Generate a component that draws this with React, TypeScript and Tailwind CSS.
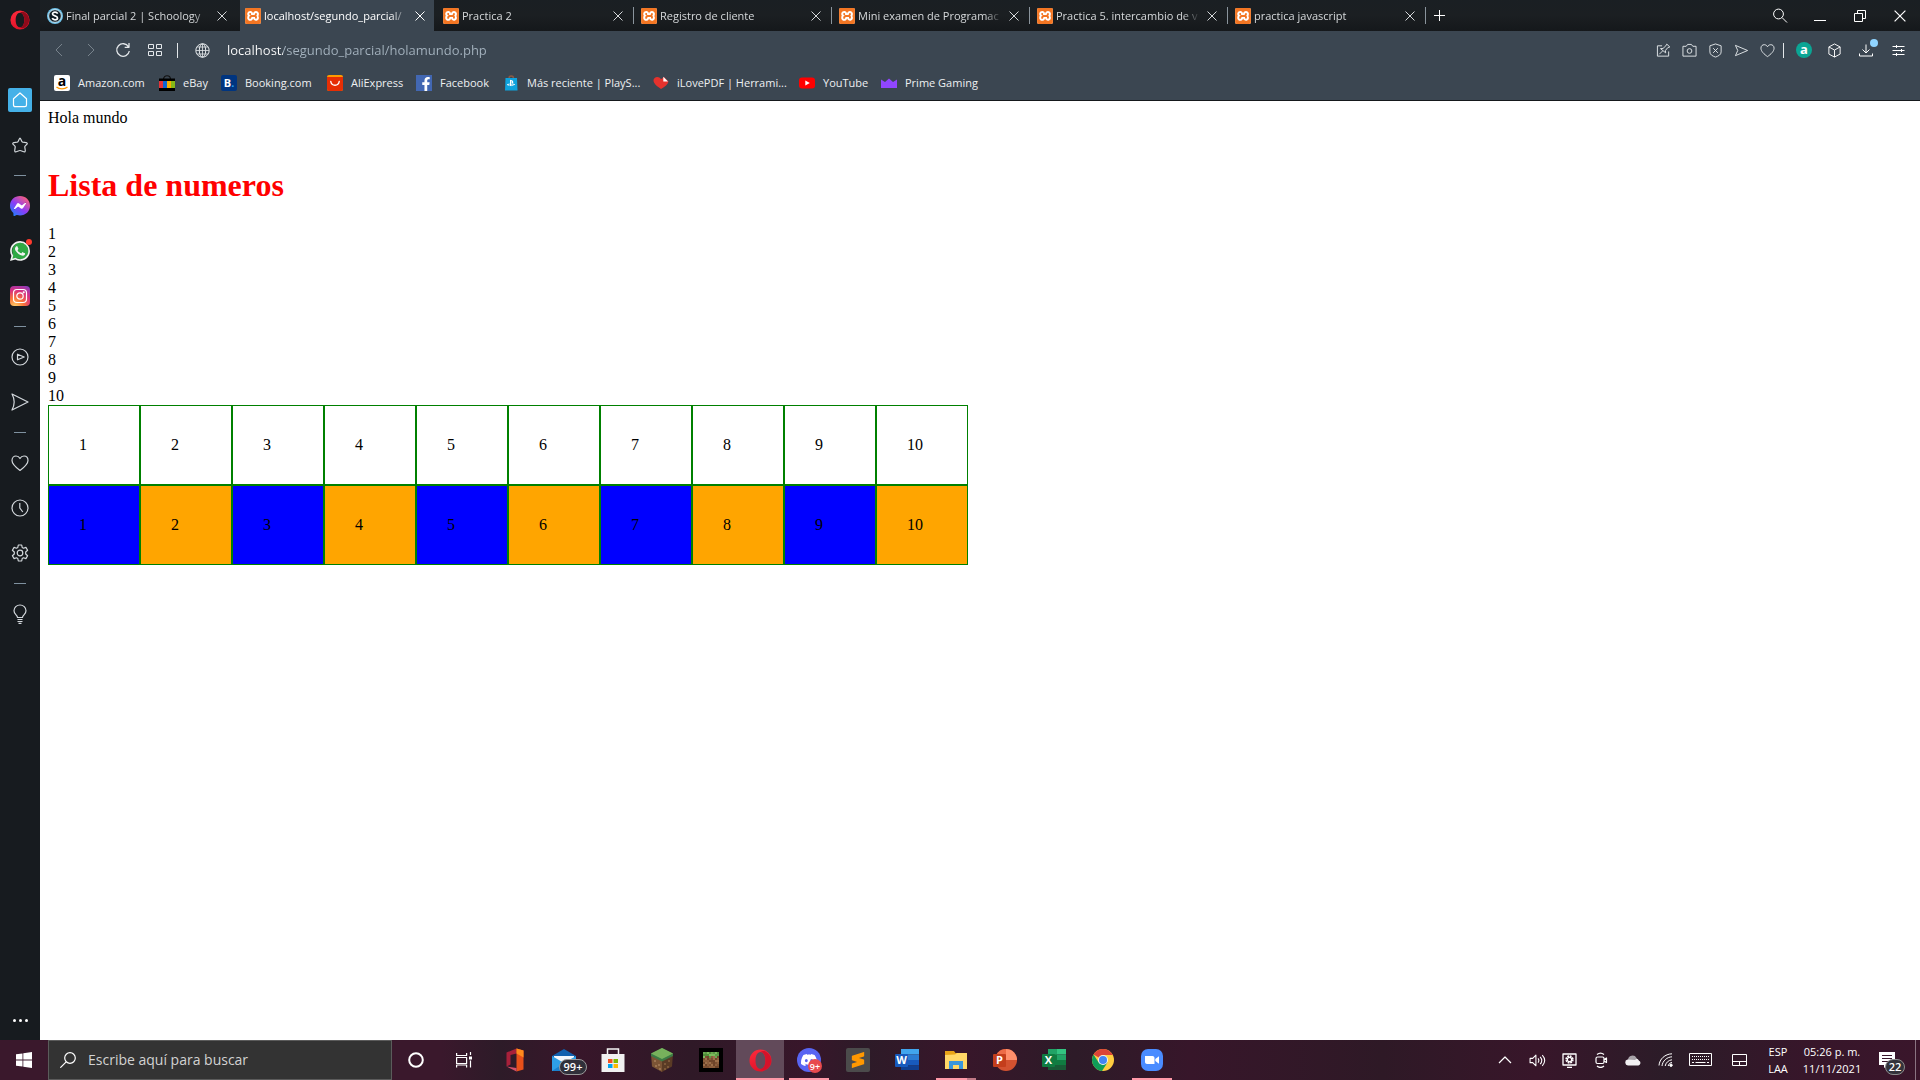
import type { ReactNode } from "react";
import { SiDiscord, SiMessenger, SiPlaystation, SiSublimetext, SiWhatsapp, SiXampp } from "react-icons/si";
import { FaFacebookF } from "react-icons/fa";

type IconProps = { size?: number; box?: number; width?: number; className?: string; children: ReactNode };

function Line({ size = 16, box = 16, width = 1, className = "", children }: IconProps) {
  return (
    <svg
      width={size}
      height={size}
      viewBox={`0 0 ${box} ${box}`}
      fill="none"
      stroke="currentColor"
      strokeWidth={width}
      strokeLinejoin="round"
      className={`shrink-0 ${className}`}
      aria-hidden="true"
    >
      {children}
    </svg>
  );
}

function XamppIcon() {
  return (
    <span className="flex size-4 shrink-0 items-center justify-center rounded-xs bg-white">
      <SiXampp className="size-4 text-[#f37623]" />
    </span>
  );
}

function SchoologyIcon() {
  return (
    <svg viewBox="0 0 16 16" className="size-4 shrink-0" aria-hidden="true">
      <circle cx="8" cy="8" r="8" fill="#6fc3ea" />
      <circle cx="8" cy="8" r="6.3" fill="#0d1a22" stroke="#e8f6fc" strokeWidth="0.8" />
      <path d="M10.7 5.6C10 4.4 8.900 4.200 8 4.200 6.500 4.200 5.500 4.900 5.500 6c0 2.500 5 1.300 5 3.900 0 1.200-1.100 1.900-2.500 1.900-1.300 0-2.300-.500-2.800-1.600" fill="none" stroke="#fff" strokeWidth="1.700" />
    </svg>
  );
}

function CloseIcon({ size = 10 }: { size?: number }) {
  return (
    <Line size={size} box={10}>
      <path d="M.5.5l9 9M9.500.5l-9 9" />
    </Line>
  );
}

function OperaRing({ size, inner }: { size: number; inner: string }) {
  return (
    <svg width={size} height={size} viewBox="0 0 24 24" aria-hidden="true">
      <defs>
        <linearGradient id={`ring${size}`} x1="0" y1="0" x2="0.300" y2="1">
          <stop offset="0" stopColor="#ff2a3c" />
          <stop offset="1" stopColor="#e0142a" />
        </linearGradient>
      </defs>
      <path
        fillRule="evenodd"
        fill={`url(#ring${size})`}
        d="M12 .5a11.500 11.500 0 1 0 0 23 11.500 11.500 0 0 0 0-23zM12 3.200c3.300 0 5.200 4 5.200 8.800s-1.900 8.800-5.200 8.800S6.800 16.800 6.800 12 8.700 3.200 12 3.200z"
      />
      <path fill={inner} d="M12 3.200c1.600-1.200 3.600-1.400 5.300-.600 3.500 2 5.700 5.500 5.700 9.400s-2.200 7.400-5.700 9.400c-1.700.800-3.700.600-5.300-.6 3.300 0 5.200-4 5.200-8.800S15.300 3.200 12 3.200z" />
    </svg>
  );
}

const tabs = [
  { title: "Final parcial 2 | Schoology", icon: <SchoologyIcon />, active: false, line: false },
  { title: "localhost/segundo_parcial/", icon: <XamppIcon />, active: true, line: false },
  { title: "Practica 2", icon: <XamppIcon />, active: false, line: true },
  { title: "Registro de cliente", icon: <XamppIcon />, active: false, line: true },
  { title: "Mini examen de Programac", icon: <XamppIcon />, active: false, line: true },
  { title: "Practica 5. intercambio de v", icon: <XamppIcon />, active: false, line: true },
  { title: "practica javascript", icon: <XamppIcon />, active: false, line: true },
];

function TabStrip() {
  return (
    <header className="flex h-[31px] bg-linear-to-b from-[#1a1f23] via-[#1b1f22] to-[#15181b]">
      <div className="flex" role="tablist" aria-label="Pestañas">
        {tabs.map((tab) => (
          <div key={tab.title} className="relative flex w-[198px] px-0.5">
            <div className={`flex min-w-0 grow items-center pl-[5px] ${tab.active ? "bg-[#3b4651] text-white" : "text-[#d5d8da]"}`}>
              <button role="tab" aria-selected={tab.active} className="flex w-[163px] items-center gap-[3px]">
                {tab.icon}
                <span className="grow overflow-hidden text-left text-[11px] leading-4 whitespace-nowrap [mask-image:linear-gradient(90deg,#000_88%,transparent)]">
                  {tab.title}
                </span>
              </button>
              <button aria-label={`Cerrar ${tab.title}`} className="ml-[7px]">
                <CloseIcon />
              </button>
            </div>
            {tab.line && <span className="absolute top-[7px] right-0 h-[17px] w-px bg-[#8a949c]" />}
          </div>
        ))}
      </div>
      <button aria-label="Nueva pestaña" className="w-7 pl-2 text-white">
        <Line size={12} box={12}>
          <path d="M5.500 0v11M0 5.500h11" />
        </Line>
      </button>
      <div className="ml-auto flex items-center text-white">
        <button aria-label="Buscar en pestañas" className="flex w-10 justify-center">
          <Line size={16}>
            <circle cx="6.500" cy="6" r="4.900" />
            <path d="M10 9.500l5 5" />
          </Line>
        </button>
        <button aria-label="Minimizar" className="flex w-10 justify-center">
          <Line size={12} box={12}>
            <path d="M0 10.500h12" />
          </Line>
        </button>
        <button aria-label="Restaurar" className="flex w-10 justify-center">
          <Line size={12} box={12}>
            <path d="M.5 3.500h8v8h-8zM3.500 3.500v-3h8v8h-3" />
          </Line>
        </button>
        <button aria-label="Cerrar" className="flex w-10 justify-center">
          <CloseIcon size={12} />
        </button>
      </div>
    </header>
  );
}

const pageTools: [string, ReactNode][] = [
  ["Editar página", <path d="M6.500 3H1.500v11h12V9M11.500 1.200l3.200 3-2.200.800-2.500 3 .3 2.500L4.800 6l2.700-.2L10.500 3zM7 8.500L3.500 12" />],
  ["Instantánea", <><path d="M1 3.500h3.500l1.500-2h4l1.500 2H15v10.500H1z" /><circle cx="8" cy="8.500" r="2.500" /></>],
  ["Bloqueador", <><path d="M8 1L2 3v6.500C2 12.500 5 14 8 15c3-1 6-2.500 6-5.500V3z" /><path d="M5.500 5.500l5 5M10.500 5.500l-5 5" /></>],
  ["Enviar a Mi flujo", <path d="M1.500 2.500l13 5.500-13 5.500L4 8z" />],
  ["Favoritos", <path d="M8 14.500C4.500 12 1 9 1 5.500 1 3 2.800 1.800 4.500 1.800c1.600 0 2.800.9 3.500 2.200.7-1.300 1.900-2.200 3.500-2.200C13.200 1.800 15 3 15 5.500c0 3.500-3.500 6.500-7 9z" />],
];

function AddressRow() {
  return (
    <div className="flex h-[38px] items-center text-[#e3e7ea]">
      <div className="flex items-center pl-[3px]">
        <button aria-label="Atrás" className="flex w-8 justify-center text-[#78838c]">
          <Line><path d="M11 2L5 8l6 6" /></Line>
        </button>
        <button aria-label="Adelante" className="flex w-8 justify-center text-[#78838c]">
          <Line><path d="M5 2l6 6-6 6" /></Line>
        </button>
        <button aria-label="Recargar" className="flex w-8 justify-center">
          <Line width={1.3}><path d="M13.500 4.800A6.300 6.300 0 1 0 14.300 9M14 1v4.300H9.700" /></Line>
        </button>
        <button aria-label="Acceso rápido" className="flex w-8 justify-center">
          <Line size={14} box={14}>
            <path d="M.5 1.500h5v4h-5zM8.500 1.500h5v4h-5zM.5 8.500h5v4h-5zM8.500 8.500h5v4h-5z" />
          </Line>
        </button>
      </div>
      <span className="ml-1.5 h-[15px] w-px bg-[#e3e7ea]" />
      <button aria-label="Información del sitio" className="ml-[17px]">
        <Line size={15} box={15}>
          <circle cx="7.500" cy="7.500" r="6.700" />
          <ellipse cx="7.500" cy="7.500" rx="3.200" ry="6.700" />
          <path d="M7.500 1v13M1 7.500h13M2 4h11M2 11h11" strokeWidth="0.8" />
        </Line>
      </button>
      <input
        aria-label="Dirección"
        defaultValue="localhost/segundo_parcial/holamundo.php"
        className="ml-[17px] h-6 min-w-0 grow bg-[linear-gradient(90deg,#fff_56px,#a5b3bf_56px)] bg-clip-text text-[13px] text-transparent caret-white outline-none"
      />
      <div className="flex items-center">
        {pageTools.map(([label, shape]) => (
          <button key={label} aria-label={label} className="flex w-[26px] justify-center">
            <Line size={15}>{shape}</Line>
          </button>
        ))}
      </div>
      <span className="ml-[3px] h-[15px] w-px bg-[#e3e7ea]" />
      <button aria-label="Amazon Assistant" className="ml-3 flex size-4 items-center justify-center rounded-full bg-[#0ba594] text-[13px] leading-4 font-bold text-white">
        <span className="-mt-0.5">a</span>
      </button>
      <div className="ml-1.5 flex items-center">
        <button aria-label="Extensiones" className="flex w-8 justify-center">
          <Line size={15} className="text-white"><path d="M8 1l6 3.200v7.600L8 15l-6-3.200V4.200zM2 4.200l6 3.300 6-3.300M8 7.500V15" /></Line>
        </button>
        <button aria-label="Descargas" className="relative flex w-8 justify-center">
          <Line size={14} box={14} className="text-white"><path d="M7 1.500v8.500M3.500 6.500L7 10l3.500-3.500M.5 10.500V13h13v-2.500" /></Line>
          <span className="absolute -top-1 right-1 size-2 rounded-full bg-[#90d4ff]" />
        </button>
        <button aria-label="Configuración rápida" className="mr-1.5 flex w-8 justify-center">
          <Line size={13} box={13} className="text-white"><path d="M.5 2.500h12M.5 6.500h12M.5 10.500h12M4.500 1v3M9.500 5v3M4.500 9v3" /></Line>
        </button>
      </div>
    </div>
  );
}

const bookmarks: { label: string; width: string; icon: ReactNode }[] = [
  {
    label: "Amazon.com",
    width: "w-[105px]",
    icon: (
      <span className="relative flex size-4 items-center justify-center rounded-xs bg-white text-sm leading-4 font-bold text-black">
        <span className="-mt-1">a</span>
        <svg viewBox="0 0 16 16" className="absolute inset-0 size-4" aria-hidden="true">
          <path d="M2.500 12c3 2.500 8 2.500 11 0" fill="none" stroke="#ff9900" strokeWidth="1.300" />
        </svg>
      </span>
    ),
  },
  {
    label: "eBay",
    width: "w-[62px]",
    icon: (
      <svg viewBox="0 0 16 16" className="size-4" aria-hidden="true">
        <path d="M4.500 4.500c0-5 7-5 7 0" fill="none" stroke="#111" strokeWidth="1.200" />
        <path d="M0 3.500h16V16H0z" fill="#000" />
        <path d="M0 6h4v7H0z" fill="#e53238" />
        <path d="M4 6h4v7H4z" fill="#0f65d2" />
        <path d="M8 6h4v7H8z" fill="#f5af02" />
        <path d="M12 6h4v7h-4z" fill="#86b817" />
      </svg>
    ),
  },
  {
    label: "Booking.com",
    width: "w-[106px]",
    icon: (
      <span className="flex size-4 items-center justify-center rounded-xs bg-[#003580] text-[11px] leading-4 font-bold text-white">
        B<span className="text-[#2a9fe8]">.</span>
      </span>
    ),
  },
  {
    label: "AliExpress",
    width: "w-[89px]",
    icon: (
      <svg viewBox="0 0 16 16" className="size-4" aria-hidden="true">
        <rect width="16" height="16" rx="2" fill="#ff9a00" />
        <path d="M0 2h16v12a2 2 0 0 1-2 2H2a2 2 0 0 1-2-2z" fill="#e62e04" />
        <path d="M3.800 6.500c.8 5 7.600 5 8.400 0" fill="none" stroke="#fff" strokeWidth="1.400" strokeLinecap="round" />
      </svg>
    ),
  },
  {
    label: "Facebook",
    width: "w-[87px]",
    icon: (
      <span className="flex size-4 items-end justify-center bg-[#4267b2] pl-1">
        <FaFacebookF className="size-3.5 text-white" />
      </span>
    ),
  },
  {
    label: "Más reciente | PlayS...",
    width: "w-[150px]",
    icon: (
      <span className="relative flex size-4 items-end justify-center">
        <svg viewBox="0 0 16 16" className="absolute inset-0 size-4" aria-hidden="true">
          <path d="M6 3.500c0-3.500 4.500-3.500 4.500 0" fill="none" stroke="#8b5a44" strokeWidth="1.500" />
          <path d="M2.500 3h11.500l.5 12.500H2z" fill="#0fa3dd" />
        </svg>
        <SiPlaystation className="relative mb-1 size-2 text-white" />
      </span>
    ),
  },
  {
    label: "iLovePDF | Herrami...",
    width: "w-[146px]",
    icon: (
      <svg viewBox="0 0 16 16" className="size-4" aria-hidden="true">
        <path d="M8 14C3.500 11 .5 8.500.5 5.300c0-3.600 5.500-4.800 7.500-1.100L11 2l4.500 4.500C15 9.500 12 11.500 8 14z" fill="#e5322d" />
        <path d="M10.300 1.800v4.700H15z" fill="#fff" />
      </svg>
    ),
  },
  {
    label: "YouTube",
    width: "w-[82px]",
    icon: (
      <svg viewBox="0 0 16 16" className="size-4" aria-hidden="true">
        <rect y="2.500" width="16" height="11" rx="3" fill="#f00" />
        <path d="M6.300 5.500v5L10.800 8z" fill="#fff" />
      </svg>
    ),
  },
  {
    label: "Prime Gaming",
    width: "w-[105px]",
    icon: (
      <svg viewBox="0 0 16 16" className="size-4" aria-hidden="true">
        <path d="M0 4.500L4 7l4-3.500L12 7l4-2.500V13H0z" fill="#9146ff" />
      </svg>
    ),
  },
];

function BookmarkRow() {
  return (
    <nav aria-label="Marcadores" className="flex h-[31px] items-center pb-1 pl-3.5">
      {bookmarks.map((item) => (
        <a key={item.label} href="#" className={`flex items-center gap-2 text-[11px] leading-4 whitespace-nowrap text-[#eef0f2] ${item.width}`}>
          <span className="shrink-0">{item.icon}</span>
          {item.label}
        </a>
      ))}
    </nav>
  );
}

type SideItem = { label: string; icon: ReactNode } | null;

const sideItems: SideItem[] = [
  {
    label: "Inicio",
    icon: (
      <span className="flex size-6 items-center justify-center rounded-xs bg-[#45b1e8] text-white">
        <Line width={1.2}><path d="M1.500 6.800L8 1l6.500 5.800V13c0 1-.7 1.700-1.700 1.700H3.200c-1 0-1.700-.7-1.700-1.700z" /></Line>
      </span>
    ),
  },
  { label: "Marcadores", icon: <Line width={1.2}><path d="M8 1c.7 0 1.200 3.200 2.300 3.900C11.400 5.600 15.300 5.300 15.300 6.400c0 1.100-2.300 2.200-2.500 3.300-.2 1.300 1.200 4.300.2 5-.9.600-3.500-1.200-5-1.200s-4.100 1.800-5 1.200c-1-.7.400-3.700.2-5C3 8.600.7 7.500.7 6.400.7 5.300 4.600 5.600 5.700 4.900 6.800 4.200 7.300 1 8 1z" /></Line> },
  null,
  {
    label: "Messenger",
    icon: (
      <>
        <svg className="absolute size-0" aria-hidden="true">
          <defs>
            <linearGradient id="msg" x1="0" y1="1" x2="0.800" y2="0">
              <stop offset="0" stopColor="#0a8cff" />
              <stop offset="0.500" stopColor="#8b3cf7" />
              <stop offset="1" stopColor="#ff6275" />
            </linearGradient>
          </defs>
        </svg>
        <span className="flex size-5 items-center justify-center rounded-full bg-[radial-gradient(circle,#fff_45%,transparent_46%)]">
          <SiMessenger className="size-5 fill-[url(#msg)]" />
        </span>
      </>
    ),
  },
  {
    label: "WhatsApp",
    icon: (
      <span className="relative flex size-5 items-center justify-center">
        <svg viewBox="0 0 20 20" className="absolute inset-0 size-5" aria-hidden="true">
          <path d="M1.500 18.500L3 13.500A8.200 8.200 0 1 1 6.800 17.300z" fill="#2fa944" />
        </svg>
        <SiWhatsapp className="relative size-5 text-[#f1f4f1]" />
        <span className="absolute -top-0.5 -right-0.5 size-1.5 rounded-full bg-[#ff3b2f]" />
      </span>
    ),
  },
  {
    label: "Instagram",
    icon: (
      <span className="flex size-5 items-center justify-center rounded-sm bg-[radial-gradient(circle_at_25%_105%,#ffd56b_0%,#f9743a_35%,#d92f7f_65%,#7640c9_100%)] text-white">
        <Line size={16} width={1.2}>
          <rect x="1.500" y="1.500" width="13" height="13" rx="3.500" />
          <circle cx="8" cy="8" r="3.200" />
          <circle cx="11.700" cy="4.300" r="0.500" />
        </Line>
      </span>
    ),
  },
  null,
  { label: "Reproductor", icon: <Line size={18} box={18} width={1.2}><circle cx="9" cy="9" r="8" /><path d="M6.500 6.200v5.600l6.700-2.800z" /></Line> },
  { label: "Mi flujo", icon: <Line size={18} box={18} width={1.2}><path d="M1 1l16 8-16 8c3-5.500 3-10.500 0-16z" /></Line> },
  null,
  { label: "Me gusta", icon: <Line size={18} box={18} width={1.2}><path d="M9 16.500C5 13.500 1 10.500 1 6.500 1 3.500 3 2 5 2c1.800 0 3.200 1 4 2.500C9.800 3 11.200 2 13 2c2 0 4 1.500 4 4.500 0 4-4 7-8 10z" /></Line> },
  { label: "Historial", icon: <Line size={18} box={18} width={1.2}><circle cx="9" cy="9" r="8" /><path d="M8.800 4v5l3 4" /></Line> },
  {
    label: "Configuración",
    icon: (
      <Line size={18} box={18} width={1.2}>
        <circle cx="9" cy="9" r="2.800" />
        <path d="M7.300 1h3.400l.5 2.500 1.300.7 2.400-.8 1.700 2.900-1.900 1.700v2l1.900 1.700-1.700 2.900-2.400-.8-1.300.7-.5 2.500H7.300l-.5-2.500-1.300-.7-2.400.8-1.700-2.900L3.300 10V8L1.400 6.300l1.700-2.900 2.400.8 1.300-.7z" />
      </Line>
    ),
  },
  null,
  {
    label: "Consejos",
    icon: (
      <Line size={20} box={20} width={1.200}>
        <path d="M7.500 13.500C7.500 11 4 10.500 4 6.700 4 3.300 6.700 1 10 1s6 2.300 6 5.700c0 3.800-3.500 4.300-3.500 6.800zM7.500 15.500h5M7.500 17.500h5M8.500 19.300h3" />
      </Line>
    ),
  },
];

function Sidebar() {
  return (
    <aside className="flex w-10 shrink-0 flex-col items-center bg-[#171b1f] text-[#d3d8dc]">
      <button aria-label="Menú de Opera" className="mt-2.5 mb-[47px] size-5">
        <OperaRing size={20} inner="#8e0a1a" />
      </button>
      {sideItems.map((item, i) =>
        item ? (
          <button key={item.label} aria-label={item.label} className="flex h-[45px] w-10 items-center justify-center">
            {item.icon}
          </button>
        ) : (
          <span key={i} className="flex h-4 items-center">
            <span className="h-px w-3 bg-[#7f919f]" />
          </span>
        ),
      )}
      <button aria-label="Personalizar barra lateral" className="mt-auto mb-3 flex h-4 w-10 items-center justify-center gap-[3px]">
        <span className="size-[3px] rounded-full bg-white" />
        <span className="size-[3px] rounded-full bg-white" />
        <span className="size-[3px] rounded-full bg-white" />
      </button>
    </aside>
  );
}

const numbers = [1, 2, 3, 4, 5, 6, 7, 8, 9, 10];

function Page() {
  return (
    <main className="grow border-t border-[#15181b] bg-white p-2 font-['Liberation_Serif',serif] text-base leading-[18px] text-black">
      <p>Hola mundo</p>
      <h1 className="mt-10 mb-[21px] text-[32px] leading-[37px] font-bold text-[#ff0000]">Lista de numeros</h1>
      {numbers.map((n) => (
        <p key={n}>{n}</p>
      ))}
      <table className="table-fixed border-separate border-spacing-0">
        <tbody>
          <tr>
            {numbers.map((n) => (
              <td key={n} className="h-20 w-[92px] border border-[#008000] px-[30px]">{n}</td>
            ))}
          </tr>
          <tr>
            {numbers.map((n) => (
              <td key={n} className="h-20 w-[92px] border border-[#008000] px-[30px] odd:bg-[#0000ff] even:bg-[#ffa500]">{n}</td>
            ))}
          </tr>
        </tbody>
      </table>
    </main>
  );
}

function OfficeTile({ letter, dark, children }: { letter: string; dark: string; children: ReactNode }) {
  return (
    <span className="relative flex size-6 items-center">
      <svg viewBox="0 0 24 24" className="absolute inset-0 size-6" aria-hidden="true">
        {children}
        <rect x="0" y="6" width="13" height="13" rx="1" fill={dark} />
      </svg>
      <span className="relative w-[13px] text-center text-[11px] leading-4 font-bold text-white">{letter}</span>
    </span>
  );
}

const grass = ["#6aa84f", "#4f8f3a", "#7bbb5c", "#5a9a45"];
const dirt = ["#8b5e3c", "#6e452a", "#9c6f4a", "#7b4f31"];

const apps: { label: string; state: string; icon: ReactNode }[] = [
  {
    label: "Office",
    state: "idle",
    icon: (
      <svg viewBox="0 0 24 24" className="size-6" aria-hidden="true">
        <path d="M13.500.5L3.500 4.500v14l4-2V7l6-1.500z" fill="#a8203a" />
        <path d="M13.500.5l7 2v19l-7 2z" fill="#e8501a" />
        <path d="M13.500.5l7 2v7l-7-4z" fill="#ff8a1d" />
        <path d="M3.500 18.500l10 1.500v3.500z" fill="#d4506a" />
      </svg>
    ),
  },
  {
    label: "Correo",
    state: "idle",
    icon: (
      <span className="relative">
        <svg viewBox="0 0 24 24" className="size-6" aria-hidden="true">
          <path d="M0 8L12 1l12 7v15H0z" fill="#1261ae" />
          <path d="M2 8h20v8H2z" fill="#f3f7fb" />
          <path d="M0 8l12 7 12-7v15H0z" fill="#2e9fe6" />
          <path d="M0 23l13-8.500L24 23z" fill="#1b80cc" />
        </svg>
        <span className="absolute top-[11px] left-[7px] flex h-4 w-7 items-center justify-center rounded-full border border-[#9a9a9a] bg-[#30303a] text-[11px] font-semibold text-white">99+</span>
      </span>
    ),
  },
  {
    label: "Microsoft Store",
    state: "idle",
    icon: (
      <svg viewBox="0 0 24 24" className="size-6" aria-hidden="true">
        <path d="M6.500 7V1h11v6" fill="none" stroke="#f4f4f4" strokeWidth="1.500" />
        <path d="M.5 6h23v18H.5z" fill="#f1f1f1" />
        <path d="M7 11h4.500v4H7z" fill="#f25022" />
        <path d="M12.500 11H17v4h-4.500z" fill="#7fba00" />
        <path d="M7 16h4.500v4H7z" fill="#00a4ef" />
        <path d="M12.500 16H17v4h-4.500z" fill="#ffb900" />
      </svg>
    ),
  },
  {
    label: "Minecraft Launcher",
    state: "idle",
    icon: (
      <svg viewBox="0 0 24 24" className="size-6" aria-hidden="true">
        <path d="M1 6l11 5.500V24L2 18.500z" fill="#7b5435" />
        <path d="M23 6l-11 5.500V24l10-5.500z" fill="#5a3b25" />
        <path d="M12 0l11 5.500v2.500L12 13.500 1 8V5.500z" fill="#3c7a45" />
        <path d="M12 0l11 5.500L12 11 1 5.500z" fill="#77b15c" />
        <path d="M4 12h2v2H4zM8 16h2v2H8zM5 17h2v2H5zM9 20h2v2H9z" fill="#9b7350" />
        <path d="M14 15h2v2h-2zM18 12h2v2h-2zM17 18h2v2h-2zM14 20h2v2h-2z" fill="#7d5838" />
      </svg>
    ),
  },
  {
    label: "Minecraft",
    state: "idle",
    icon: (
      <svg viewBox="0 0 24 24" className="size-6" shapeRendering="crispEdges" aria-hidden="true">
        <path d="M0 0h24v24H0z" fill="#000" />
        {Array.from({ length: 64 }, (_, i) => {
          const row = Math.floor(i / 8);
          const col = i % 8;
          const green = row < 2 || (row === 2 && col % 3 === 0);
          const tone = (row * 5 + col * 3 + ((row * col) % 3)) % 4;
          return <rect key={i} x={4 + col * 2} y={4 + row * 2} width="2" height="2" fill={green ? grass[tone] : dirt[tone]} />;
        })}
      </svg>
    ),
  },
  { label: "Opera", state: "active", icon: <OperaRing size={23} inner="#d5122a" /> },
  {
    label: "Discord",
    state: "open",
    icon: (
      <span className="relative flex size-6 items-center justify-center rounded-full bg-[#5865f2]">
        <SiDiscord className="size-4 text-white" />
        <span className="absolute -right-px -bottom-px flex size-3.5 items-center justify-center rounded-full bg-[#e84a4d] text-[9px] leading-none font-semibold text-white">9+</span>
      </span>
    ),
  },
  {
    label: "Sublime Text",
    state: "idle",
    icon: (
      <span className="flex size-6 items-center justify-center rounded-xs bg-[#4b4b4b]">
        <SiSublimetext className="size-4 text-[#ff9800]" />
      </span>
    ),
  },
  {
    label: "Word",
    state: "idle",
    icon: (
      <OfficeTile letter="W" dark="#185abd">
        <path d="M6 1h18v5.500H6z" fill="#41a5ee" />
        <path d="M6 6.500h18V12H6z" fill="#2b7cd3" />
        <path d="M6 12h18v5.500H6z" fill="#185abd" />
        <path d="M6 17.500h18V22H6z" fill="#103f91" />
      </OfficeTile>
    ),
  },
  {
    label: "Explorador de archivos",
    state: "multi",
    icon: (
      <svg viewBox="0 0 24 24" className="size-6" aria-hidden="true">
        <path d="M1 3h9l1.500 2H23v15H1z" fill="#e8a317" />
        <path d="M1 7l10-.5L13 5h10v16H1z" fill="#ffd767" />
        <path d="M5 13h14v8h-4v-4H9v4H5z" fill="#3996dc" />
      </svg>
    ),
  },
  {
    label: "PowerPoint",
    state: "idle",
    icon: (
      <OfficeTile letter="P" dark="#c43e1c">
        <circle cx="13" cy="12" r="11" fill="#d35230" />
        <path d="M13 1a11 11 0 0 1 11 11H13z" fill="#ff8f6b" />
        <path d="M13 1v11H2A11 11 0 0 1 13 1z" fill="#ed6c47" />
      </OfficeTile>
    ),
  },
  {
    label: "Excel",
    state: "idle",
    icon: (
      <OfficeTile letter="X" dark="#107c41">
        <path d="M6 1h9v7H6z" fill="#21a366" />
        <path d="M15 1h9v5.500h-9z" fill="#33c481" />
        <path d="M6 6.500h9V17H6z" fill="#107c41" />
        <path d="M15 6.500h9V12h-9z" fill="#21a366" />
        <path d="M15 12h9v5h-9z" fill="#107c41" />
        <path d="M6 17h18v5H6z" fill="#185c37" />
      </OfficeTile>
    ),
  },
  {
    label: "Google Chrome",
    state: "idle",
    icon: (
      <svg viewBox="0 0 24 24" className="size-6" aria-hidden="true">
        <circle cx="12" cy="12" r="11" fill="#ffcd40" />
        <path d="M12 12L2.500 6.500a11 11 0 0 1 19 0L22 7H12z" fill="#db4437" />
        <path d="M2.500 6.500A11 11 0 0 0 11 23l5.500-8.500L12 12 7.700 14.500z" fill="#0f9d58" />
        <circle cx="12" cy="12" r="5" fill="#f1f1f1" />
        <circle cx="12" cy="12" r="4" fill="#4285f4" />
      </svg>
    ),
  },
  {
    label: "Zoom",
    state: "open",
    icon: (
      <svg viewBox="0 0 24 24" className="size-6" aria-hidden="true">
        <rect x="1" y="1" width="22" height="22" rx="7" fill="#4a8cff" />
        <path d="M5 8h7.500c1 0 2 .8 2 2v6H7c-1 0-2-.8-2-2zM15.300 11l3.700-2.700v7.400L15.300 13z" fill="#fff" />
      </svg>
    ),
  },
];

function AppButton({ label, state, icon }: { label: string; state: string; icon: ReactNode }) {
  return (
    <button aria-label={label} className={`relative flex h-10 w-12 items-center justify-center ${state === "active" ? "bg-[#624a5a]" : ""}`}>
      {icon}
      {state === "active" && <span className="absolute inset-x-0 bottom-0 h-0.5 bg-[#ff99a8]" />}
      {state === "open" && <span className="absolute inset-x-1 bottom-0 h-0.5 bg-[#ff99a8]" />}
      {state === "multi" && <span className="absolute inset-x-1 bottom-0 h-0.5 border-r-9 border-[#c07886] bg-[#ff99a8]" />}
    </button>
  );
}

const tray: { label: string; width: string; icon: ReactNode }[] = [
  { label: "Mostrar iconos ocultos", width: "w-8", icon: <Line size={14} box={14} width={1.2}><path d="M1 10l6-6 6 6" /></Line> },
  { label: "Volumen", width: "w-8", icon: <Line size={17}><path d="M1 6h2.500l3-3v10l-3-3H1zM8.500 6c1 1.300 1 2.700 0 4M10.500 4.500c2 2.300 2 4.700 0 7M12.500 3c3 3.300 3 6.700 0 10" /></Line> },
  { label: "Gráficos", width: "w-8", icon: <Line size={15} box={15} width={1.3}><path d="M1 1h13v11H1zM5 14.300h5" /><circle cx="7.500" cy="6.500" r="3.200" strokeWidth="2" strokeDasharray="1.700 .8" /><circle cx="7.500" cy="6.500" r="2.200" /></Line> },
  { label: "Reunirse ahora", width: "w-8", icon: <Line size={16} width={1.200}><rect x="3" y="5" width="8" height="6.500" rx="1.500" /><path d="M11 7.500l2.500-1.500v4.500L11 9M4 2.500c2-1.700 5-1.700 7 0M4 14c2 1.700 5 1.700 7 0" /></Line> },
  {
    label: "OneDrive",
    width: "w-8",
    icon: (
      <svg width="16" height="16" viewBox="0 0 16 16" aria-hidden="true">
        <path d="M3 8a4.500 4.500 0 0 1 8.500-2L14 9z" fill="#a8a2a8" />
        <path d="M3 13.500A3 3 0 0 1 2.500 7.600L10 8c1.500-1.500 3-1 3.700.500A2.600 2.600 0 0 1 13.500 13.500z" fill="#f3f1f3" />
      </svg>
    ),
  },
  { label: "Red Wi-Fi", width: "w-[33px]", icon: <Line size={16}><path d="M1 13.500C1.500 7 7 2 14 1.800M4 14c.5-5 5-9 10-9.200M7.200 14c.4-3 3.300-6 6.800-6.200M10.200 14c.3-2 2-3.500 3.800-3.500" /><circle cx="13" cy="13.200" r="1.200" fill="currentColor" /></Line> },
  {
    label: "Teclado táctil",
    width: "w-9",
    icon: (
      <svg width="23" height="14" viewBox="0 0 23 14" fill="none" stroke="currentColor" aria-hidden="true">
        <path d="M.5.5h22v12H.5z" />
        <path d="M3 3.500h17M3 6.500h17" strokeDasharray="1 1" />
        <path d="M3 9.500h2M6.500 9.500h10M18 9.500h2" />
      </svg>
    ),
  },
  { label: "Panel táctil virtual", width: "w-11", icon: <Line size={16}><path d="M.5 2.500h14v11H.5zM.5 9.500h14M7.500 9.500v4" /></Line> },
];

function Taskbar() {
  return (
    <footer className="flex h-10 items-center bg-[linear-gradient(90deg,#3a182c_0%,#3a182c_23%,#2d1b28_26%,#38162a_30%,#2f1927_36%,#38162a_42%,#2d1b28_45%,#38162a_50%,#2d1b28_56%,#37162a_62%,#2e1926_72%,#38162a_80%,#2b1c28_87%,#37162a_94%,#3a162b_100%)] text-white">
      <button aria-label="Inicio" className="flex h-10 w-12 items-center justify-center">
        <svg width="16" height="16" viewBox="0 0 16 16" fill="#fff" aria-hidden="true">
          <path d="M0 2.300L6.500 1.400v6.200H0zM7.300 1.300L16 0v7.600H7.300zM0 8.400h6.500v6.200L0 13.700zM7.300 8.400H16V16l-8.700-1.300z" />
        </svg>
      </button>
      <label className="flex h-10 w-[344px] items-center gap-3 border border-[#5b5b5b] bg-[#333] pl-[11px]">
        <Line size={16} width={1.2}>
          <circle cx="10" cy="6" r="5.300" />
          <path d="M6.200 9.800L.3 15.700" />
        </Line>
        <span className="sr-only">Buscar</span>
        <input placeholder="Escribe aquí para buscar" className="min-w-0 grow bg-transparent text-sm outline-none placeholder:text-[#d2d2d2]" />
      </label>
      <button aria-label="Cortana" className="flex w-12 justify-center">
        <Line width={2}><circle cx="8" cy="8" r="6.800" /></Line>
      </button>
      <button aria-label="Vista de tareas" className="flex w-12 justify-center">
        <Line width={1.2}><path d="M.6 1v2.500h10V1M.6 5.500h10v6H.6zM.6 15.500v-2.500h10v2.500M14.500 0v3M14.500 8.500v7" /><path d="M13 4.500h3v3h-3z" fill="currentColor" stroke="none" /></Line>
      </button>
      <div className="ml-[3px] flex gap-px">
        {apps.map((app) => (
          <AppButton key={app.label} label={app.label} state={app.state} icon={app.icon} />
        ))}
      </div>
      <div className="ml-auto flex items-center">
        {tray.map((item) => (
          <button key={item.label} aria-label={item.label} className={`flex items-center justify-center ${item.width}`}>
            {item.icon}
          </button>
        ))}
        <button className="mr-0.5 w-8 text-center text-[11px] leading-[17px]">
          <span className="block">ESP</span>
          <span className="block">LAA</span>
        </button>
        <button className="w-[72px] text-center text-[11px] leading-[17px] whitespace-nowrap">
          <time className="block">05:26 p. m.</time>
          <time className="block">11/11/2021</time>
        </button>
        <button aria-label="Notificaciones: 22" className="relative flex h-10 w-12 items-center justify-center border-r border-[#8a7482] pr-2.5">
          <svg width="16" height="16" viewBox="0 0 16 16" aria-hidden="true">
            <path d="M0 0h16v13H9l-4 3v-3H0z" fill="#fff" />
            <path d="M3 3.500h10M3 6.500h10M3 9.500h7" stroke="#3a162b" />
          </svg>
          <span className="absolute top-[19px] right-2.5 flex h-4 w-5 items-center justify-center rounded-full border border-[#8d8d8d] bg-[#33333b] text-[11px] font-semibold">22</span>
        </button>
        <span className="w-1" />
      </div>
    </footer>
  );
}

export default function App() {
  return (
    <div className="flex min-h-screen flex-col bg-white font-['Open_Sans',sans-serif]">
      <div className="flex grow">
        <Sidebar />
        <div className="flex min-w-0 grow flex-col">
          <TabStrip />
          <div className="bg-[#3b4651]">
            <AddressRow />
            <BookmarkRow />
          </div>
          <Page />
        </div>
      </div>
      <Taskbar />
    </div>
  );
}
